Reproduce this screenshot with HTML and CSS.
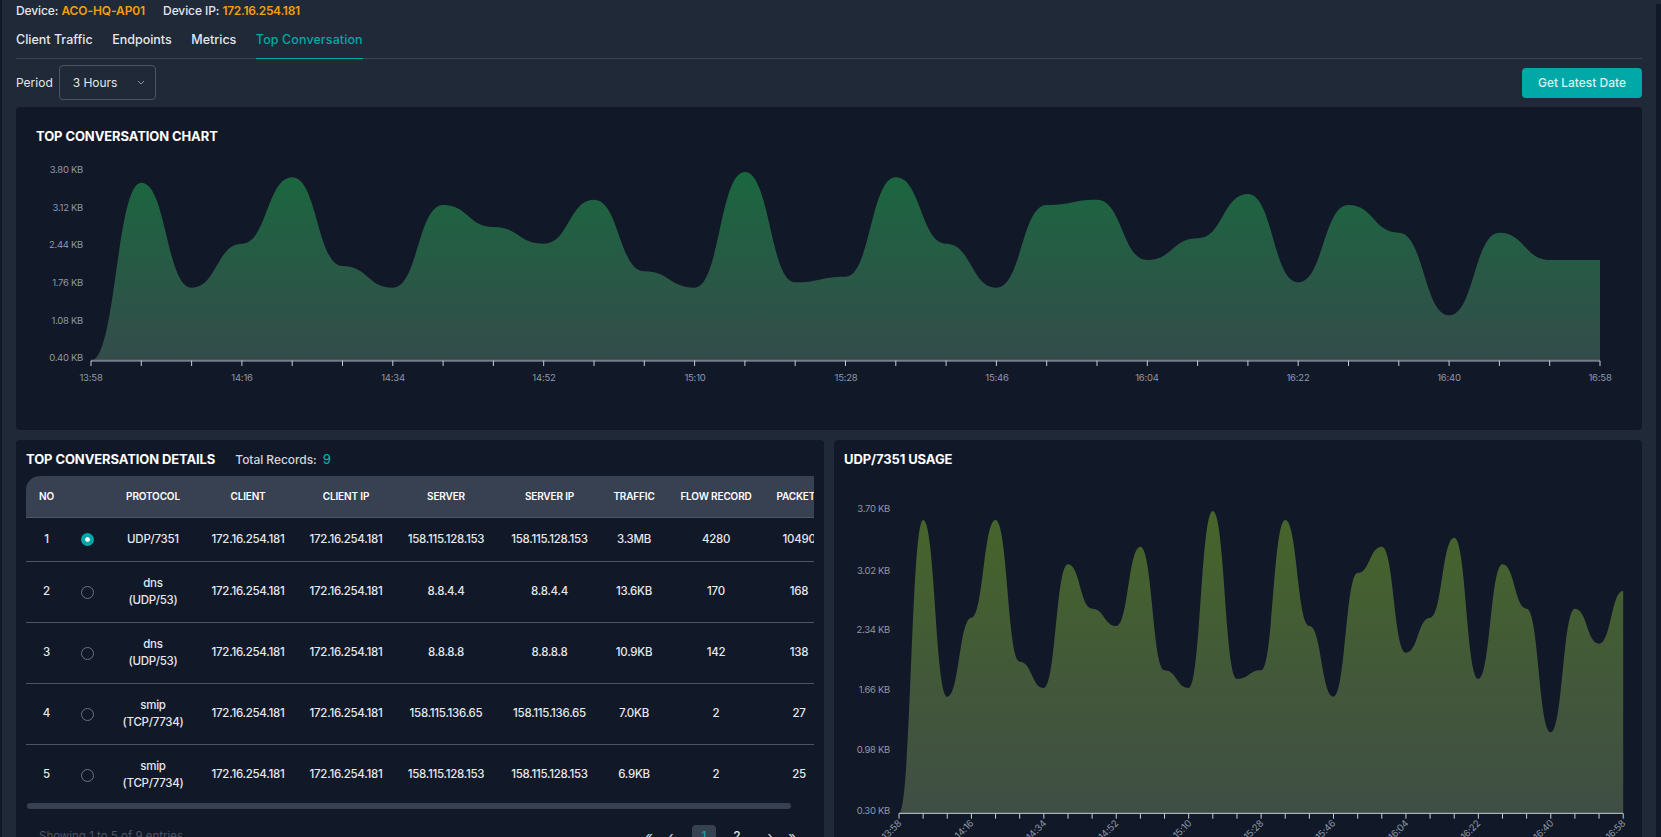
FILE: index.html
```html
<!DOCTYPE html>
<html lang="en">
<head>
<meta charset="utf-8">
<title>Top Conversation</title>
<link rel="stylesheet" href="styles.css">
</head>
<body>
<div class="shell">
  <div class="edge"></div>
  <main class="main">
    <div class="device">
      <span>Device: <b class="dev-name">ACO-HQ-AP01</b></span>
      <span>Device IP: <b>172.16.254.181</b></span>
    </div>
    <nav class="tabs">
      <a class="tab">Client Traffic</a>
      <a class="tab">Endpoints</a>
      <a class="tab">Metrics</a>
      <a class="tab active">Top Conversation</a>
    </nav>
    <div class="toolbar">
      <div class="period">
        <span>Period</span>
        <div class="select">3 Hours
          <svg class="chev" viewBox="0 0 8 5"><path d="M1 1l3 3 3-3"/></svg>
        </div>
      </div>
      <button class="btn">Get Latest Date</button>
    </div>

    <section class="panel panel-top">
      <h2 class="title title-top">TOP CONVERSATION CHART</h2>
      <svg class="chart chart-wide" viewBox="0 0 1626 280">
        <defs>
          <linearGradient id="g1" x1="0" y1="0" x2="0" y2="1">
            <stop offset="0" stop-color="#1a673f"/>
            <stop offset="1" stop-color="#344c4b"/>
          </linearGradient>
          <linearGradient id="g2" x1="0" y1="0" x2="0" y2="1">
            <stop offset="0" stop-color="#46652a"/>
            <stop offset="1" stop-color="#3f4e45"/>
          </linearGradient>
        </defs>
        <g class="ylab">
          <text x="67" y="23">3.80 KB</text>
          <text x="67" y="60.5">3.12 KB</text>
          <text x="67" y="98">2.44 KB</text>
          <text x="67" y="136">1.76 KB</text>
          <text x="67" y="173.5">1.08 KB</text>
          <text x="67" y="211">0.40 KB</text>
        </g>
        <g transform="translate(75 0) scale(5.03 .33333)">
          <path fill="url(#g1)" d="M0 632C5 632 5 98 10 98S15 413 20 413S25 281 30 281S35 82 40 82S45 348 50 348S55 413 60 413S65 165 70 165S75 231 80 231S85 281 90 281S95 149 100 149S105 364 110 364S115 413 120 413S125 66 130 66S135 397 140 397S145 380 150 380S155 82 160 82S165 281 170 281S175 413 180 413S185 165 190 165S195 149 200 149S205 330 210 330S215 265 220 265S225 132 230 132S235 397 240 397S245 165 250 165S255 248 260 248S265 496 270 496S275 248 280 248S285 330 290 330S295 330 300 330V632Z"/>
          <path class="axis" d="M0 632H300"/>
          <path class="ticks" d="M0 632v16M10 632v16M20 632v16M30 632v16M40 632v16M50 632v16M60 632v16M70 632v16M80 632v16M90 632v16M100 632v16M110 632v16M120 632v16M130 632v16M140 632v16M150 632v16M160 632v16M170 632v16M180 632v16M190 632v16M200 632v16M210 632v16M220 632v16M230 632v16M240 632v16M250 632v16M260 632v16M270 632v16M280 632v16M290 632v16M300 632v16"/>
        </g>
        <g class="xlab">
          <text x="75" y="231">13:58</text>
          <text x="226" y="231">14:16</text>
          <text x="377" y="231">14:34</text>
          <text x="528" y="231">14:52</text>
          <text x="679" y="231">15:10</text>
          <text x="830" y="231">15:28</text>
          <text x="981" y="231">15:46</text>
          <text x="1131" y="231">16:04</text>
          <text x="1282" y="231">16:22</text>
          <text x="1433" y="231">16:40</text>
          <text x="1584" y="231">16:58</text>
        </g>
      </svg>
    </section>

    <div class="lower">
      <section class="panel panel-table">
        <div class="table-head">
          <h2 class="title">TOP CONVERSATION DETAILS</h2>
          <span class="records">Total Records: <em>9</em></span>
        </div>
        <div class="table-wrap">
          <table class="grid">
            <colgroup>
              <col class="c-no"><col class="c-radio"><col class="c-proto"><col class="c-client"><col class="c-client"><col class="c-server"><col class="c-serverip"><col class="c-traffic"><col class="c-flow"><col class="c-packet">
            </colgroup>
            <thead>
              <tr><th>NO</th><th></th><th>PROTOCOL</th><th>CLIENT</th><th>CLIENT IP</th><th>SERVER</th><th>SERVER IP</th><th>TRAFFIC</th><th>FLOW RECORD</th><th>PACKETS</th></tr>
            </thead>
            <tbody>
              <tr class="row-first"><td>1</td><td><input class="radio" type="radio" name="conv" checked></td><td>UDP/7351</td><td>172.16.254.181</td><td>172.16.254.181</td><td>158.115.128.153</td><td>158.115.128.153</td><td>3.3MB</td><td>4280</td><td>10490</td></tr>
              <tr><td>2</td><td><input class="radio" type="radio" name="conv"></td><td>dns<br>(UDP/53)</td><td>172.16.254.181</td><td>172.16.254.181</td><td>8.8.4.4</td><td>8.8.4.4</td><td>13.6KB</td><td>170</td><td>168</td></tr>
              <tr><td>3</td><td><input class="radio" type="radio" name="conv"></td><td>dns<br>(UDP/53)</td><td>172.16.254.181</td><td>172.16.254.181</td><td>8.8.8.8</td><td>8.8.8.8</td><td>10.9KB</td><td>142</td><td>138</td></tr>
              <tr><td>4</td><td><input class="radio" type="radio" name="conv"></td><td>smip<br>(TCP/7734)</td><td>172.16.254.181</td><td>172.16.254.181</td><td>158.115.136.65</td><td>158.115.136.65</td><td>7.0KB</td><td>2</td><td>27</td></tr>
              <tr class="row-last"><td>5</td><td><input class="radio" type="radio" name="conv"></td><td>smip<br>(TCP/7734)</td><td>172.16.254.181</td><td>172.16.254.181</td><td>158.115.128.153</td><td>158.115.128.153</td><td>6.9KB</td><td>2</td><td>25</td></tr>
            </tbody>
          </table>
        </div>
        <div class="scroll-thumb"></div>
        <div class="table-foot">
          <span class="showing">Showing 1 to 5 of 9 entries</span>
          <div class="pager">
            <span class="pg">«</span><span class="pg">‹</span>
            <div class="pg-nums"><span class="pg-num current">1</span><span class="pg-num">2</span></div>
            <span class="pg">›</span><span class="pg">»</span>
          </div>
        </div>
      </section>

      <section class="panel panel-usage">
        <h2 class="title">UDP/7351 USAGE</h2>
        <svg class="chart chart-usage" viewBox="0 0 808 367">
          <g class="ylab">
            <text x="56" y="42">3.70 KB</text>
            <text x="56" y="103.5">3.02 KB</text>
            <text x="56" y="163">2.34 KB</text>
            <text x="56" y="223">1.66 KB</text>
            <text x="56" y="283">0.98 KB</text>
            <text x="56" y="344">0.30 KB</text>
          </g>
          <g transform="translate(65 -50) scale(2.414 .33333)">
            <path fill="url(#g2)" d="M0 1180C5 1180 5 300 10 300S15 830 20 830S25 593 30 593S35 300 40 300S45 725 50 725S55 804 60 804S65 433 70 433S75 566 80 566S85 618 90 618S95 380 100 380S105 751 110 751S115 804 120 804S125 273 130 273S135 777 140 777S145 751 150 751S155 300 160 300S165 618 170 618S175 830 180 830S185 459 190 459S195 380 200 380S205 698 210 698S215 593 220 593S225 353 230 353S235 777 240 777S245 433 250 433S255 566 260 566S265 937 270 937S275 566 280 566S285 671 290 671S295 513 300 513V1180Z"/>
            <path class="axis-thin" d="M0 1180H300"/>
            <path class="ticks" d="M0 1180v16M10 1180v16M20 1180v16M30 1180v16M40 1180v16M50 1180v16M60 1180v16M70 1180v16M80 1180v16M90 1180v16M100 1180v16M110 1180v16M120 1180v16M130 1180v16M140 1180v16M150 1180v16M160 1180v16M170 1180v16M180 1180v16M190 1180v16M200 1180v16M210 1180v16M220 1180v16M230 1180v16M240 1180v16M250 1180v16M260 1180v16M270 1180v16M280 1180v16M290 1180v16M300 1180v16"/>
          </g>
          <g class="xrot">
            <text transform="translate(68 354) rotate(-45)">13:58</text>
            <text transform="translate(140 354) rotate(-45)">14:16</text>
            <text transform="translate(213 354) rotate(-45)">14:34</text>
            <text transform="translate(285 354) rotate(-45)">14:52</text>
            <text transform="translate(358 354) rotate(-45)">15:10</text>
            <text transform="translate(430 354) rotate(-45)">15:28</text>
            <text transform="translate(502 354) rotate(-45)">15:46</text>
            <text transform="translate(575 354) rotate(-45)">16:04</text>
            <text transform="translate(647 354) rotate(-45)">16:22</text>
            <text transform="translate(720 354) rotate(-45)">16:40</text>
            <text transform="translate(792 354) rotate(-45)">16:58</text>
          </g>
        </svg>
      </section>
    </div>
  </main>
  <div class="gutter"></div>
</div>
</body>
</html>
```
FILE: styles.css
```css
* { box-sizing: border-box; }
html, body { margin: 0; height: 100%; overflow: hidden; }
body {
  background: #1f2937;
  color: #e5e7eb;
  font-family: Inter, "Noto Sans", "Liberation Sans", sans-serif;
  font-size: 12px;
}
.shell { display: flex; height: 837px; overflow: hidden; }
.edge { flex: 0 0 2px; background: #111827; }
.gutter { flex: 0 0 5px; margin-top: 4px; background: #111827; }
.main { flex: 1 1 auto; min-width: 0; padding: 0 14px; }

.device { display: flex; gap: 18px; height: 20px; align-items: center; font-weight: 500; letter-spacing: -.1px; }
.device b { color: #f59e0b; font-weight: 600; letter-spacing: -.3px; }
.device .dev-name { letter-spacing: -.1px; }

.tabs { display: flex; gap: 19.5px; height: 39px; border-bottom: 1px solid #3a4453; }
.tab { height: 39px; padding-top: 12px; font-size: 12.5px; font-weight: 500; color: #e5e7eb; }
.tab.active { color: #00a8a8; border-bottom: 1px solid #00a8a8; letter-spacing: .1px; }

.toolbar { display: flex; justify-content: space-between; align-items: center; height: 47px; margin-bottom: 1px; }
.period { display: flex; align-items: center; gap: 6px; }
.select {
  width: 97px; height: 35px; border: 1px solid #4b5563; border-radius: 4px;
  display: flex; align-items: center; justify-content: space-between; padding: 0 10px 0 13px;
  letter-spacing: -.05px;
}
.chev { width: 8px; height: 5px; }
.chev path { fill: none; stroke: #8a94a3; stroke-width: 1; }
.btn {
  width: 120px; height: 30px; border: 0; border-radius: 4px; background: #00a8a8;
  color: #d9f3f3; font: 500 12px Inter, sans-serif;
}

.panel { background: #111827; border-radius: 4px; }
.panel-top { height: 323px; }
.title { margin: 0; font-size: 13px; font-weight: 700; color: #fff; letter-spacing: -.1px; }
.title-top { height: 43px; padding: 21px 0 0 20px; }
.chart { display: block; }
.chart-wide { width: 1626px; height: 280px; }
.chart-usage { width: 808px; height: 367px; }
.ylab text { font-size: 9.5px; fill: #8f98a8; text-anchor: end; letter-spacing: -.3px; }
.xlab text { font-size: 9.5px; fill: #8f98a8; text-anchor: middle; letter-spacing: -.2px; }
.xrot text { font-size: 9.5px; fill: #8f98a8; text-anchor: end; letter-spacing: -.2px; }
.axis { fill: none; stroke: #767d8a; stroke-width: 2px; vector-effect: non-scaling-stroke; }
.axis-thin { fill: none; stroke: #c9ced6; stroke-width: 1px; vector-effect: non-scaling-stroke; }
.ticks { fill: none; stroke: #c9ced6; stroke-width: 1px; vector-effect: non-scaling-stroke; }

.lower { display: grid; grid-template-columns: 808px 808px; gap: 10px; margin-top: 10px; }
.panel-table { height: 420px; padding: 0 10px; }
.panel-usage { height: 420px; overflow: hidden; }
.panel-usage .title { height: 30px; padding: 11px 0 0 10px; }
.table-head { display: flex; align-items: center; gap: 20px; height: 36px; padding-top: 1px; }
.records { font-weight: 500; color: #d1d5db; letter-spacing: -.05px; }
.records em { font-style: normal; color: #00a8a8; font-size: 13px; margin-left: 3px; }

.table-wrap { width: 788px; overflow: hidden; }
.grid { table-layout: fixed; width: 806px; border-collapse: collapse; text-align: center; }
.c-no { width: 41px; }
.c-radio { width: 40px; }
.c-proto { width: 92px; }
.c-client { width: 98px; }
.c-server { width: 102px; }
.c-serverip { width: 105px; }
.c-traffic { width: 64px; }
.c-flow { width: 100px; }
.c-packet { width: 66px; }
.grid th {
  height: 41px; padding: 0; background: #374151; border-bottom: 1px solid #4b5563;
  font-size: 10px; font-weight: 600; color: #fff; white-space: nowrap; letter-spacing: -.15px;
}
.grid th:first-child { border-top-left-radius: 14px; }
.grid td {
  height: 61px; padding: 0; border-bottom: 1px solid #4b5563; line-height: 17px;
  font-size: 11.5px; font-weight: 500; color: #e5e7eb; white-space: nowrap; letter-spacing: -.27px;
}
.row-first td { height: 44px; }
.row-last td { height: 61px; border-bottom: 0; }
.radio {
  appearance: none; display: block; width: 13px; height: 13px; margin: 1px auto 0;
  border: 1px solid #6b7280; border-radius: 50%;
}
.radio:checked { background: #00a8a8; border: 4px solid #00a8a8; box-shadow: inset 0 0 0 3px #fff; }

.scroll-thumb { width: 764px; height: 6px; margin: -2px 0 0 1px; border-radius: 3px; background: #374151; position: relative; }
.table-foot { display: flex; justify-content: space-between; align-items: center; margin-top: 16px; height: 22px; padding: 0 11px 0 13px; }
.showing { color: #4b5563; font-size: 11.5px; }
.pager { display: flex; align-items: center; font-size: 13px; color: #e5e7eb; }
.pg { width: 22px; text-align: center; }
.pg-nums { display: flex; gap: 9px; margin: 0 10px; font-size: 12px; }
.pg-num { width: 24px; height: 22px; line-height: 22px; text-align: center; border-radius: 4px; font-weight: 500; }
.pg-num.current { background: #374151; color: #00a8a8; }
```
